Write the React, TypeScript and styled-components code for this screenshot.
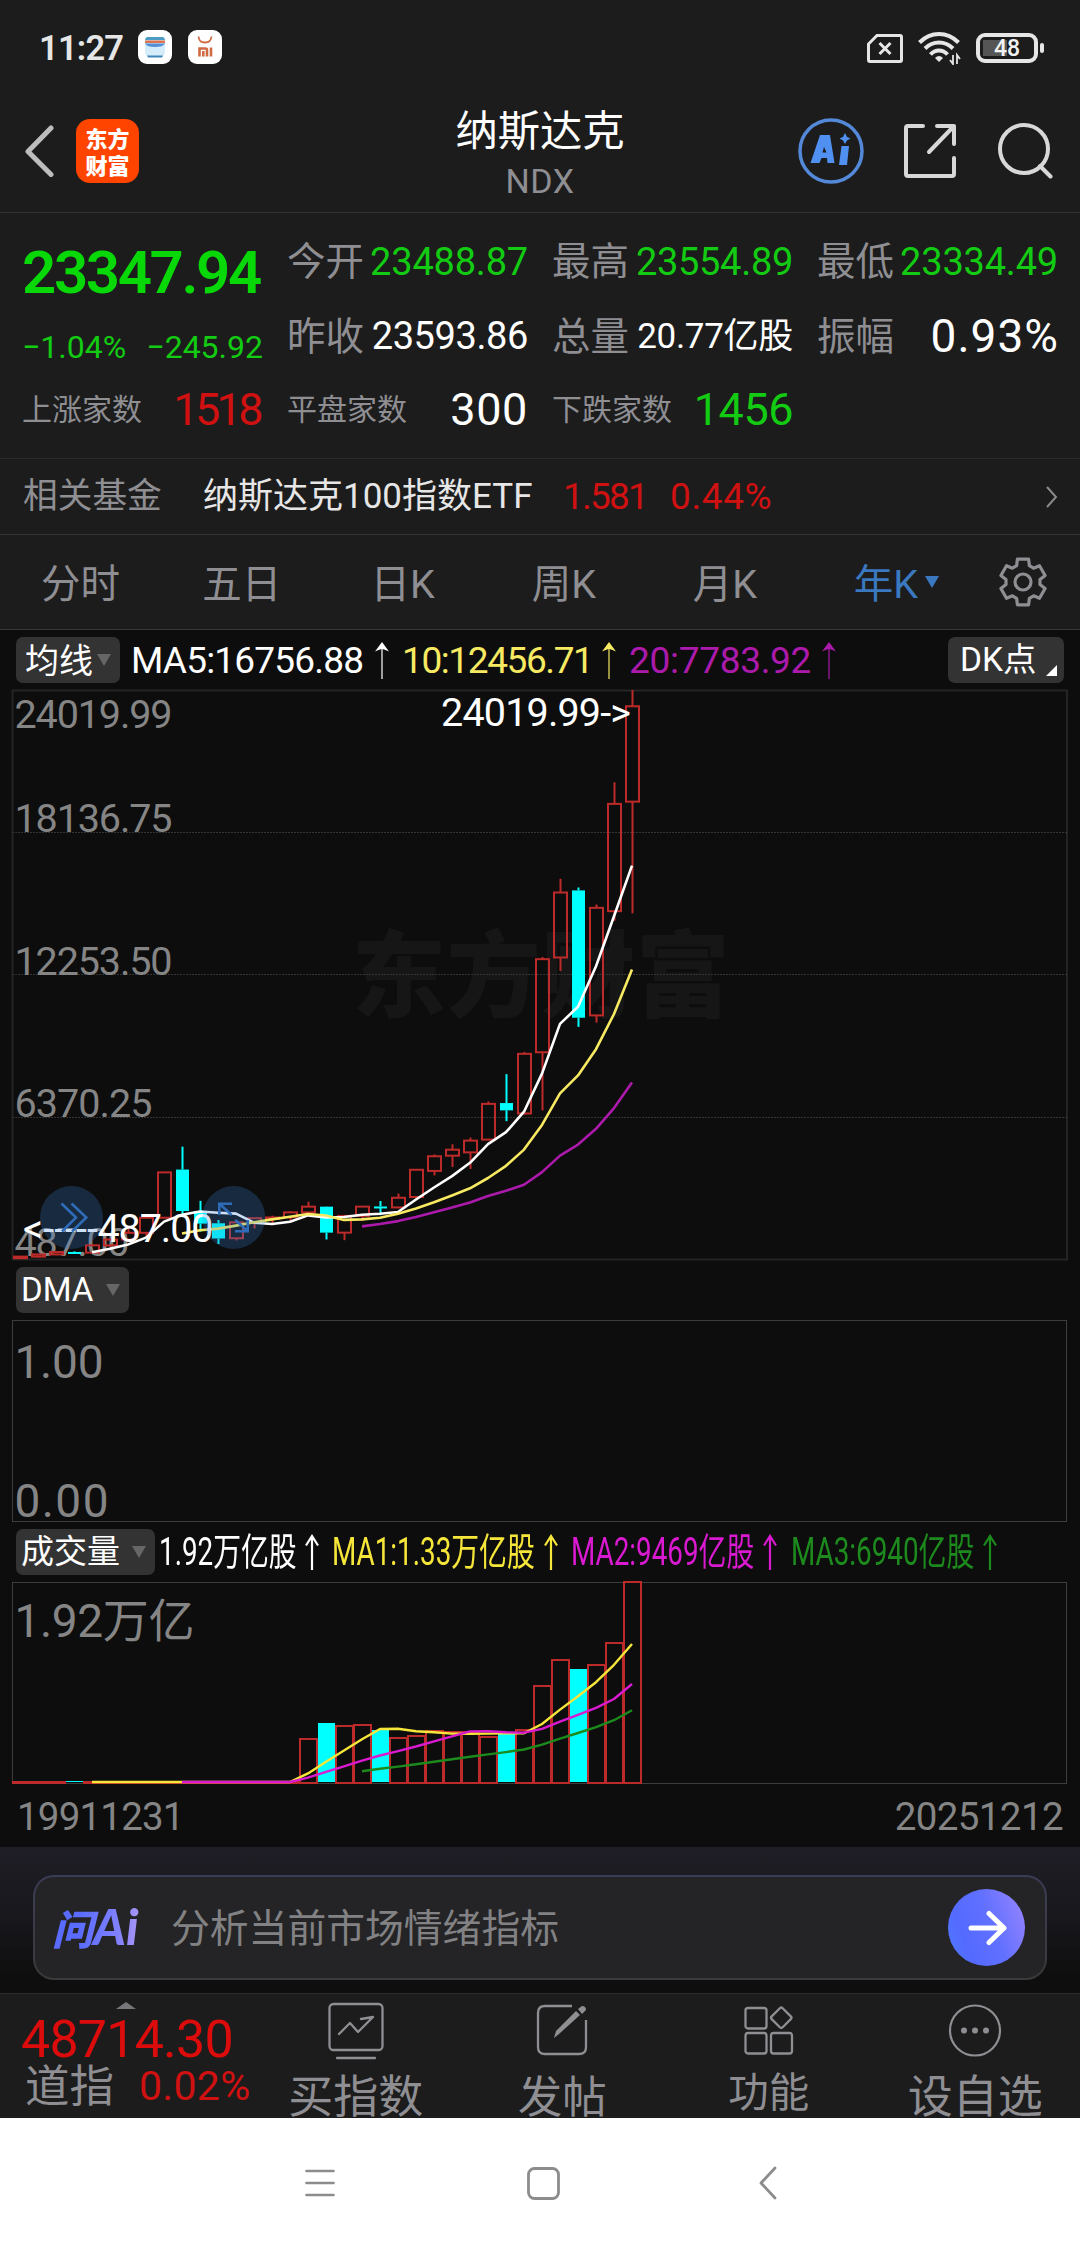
import React from "react";
import styled, { createGlobalStyle } from "styled-components";

const GREEN = "#12cb12";
const RED = "#cf1111";
const GRAY = "#8e8e93";
const BLUE = "#3a78c0";

const Global = createGlobalStyle`
  html, body { margin: 0; padding: 0; background: #fff; }
  * { box-sizing: border-box; }
  body { font-family: Roboto, "Noto Sans CJK SC", sans-serif; }
  svg { display: block; flex: none; }
`;

const Screen = styled.div`
  width: 1080px;
  height: 2248px;
  display: flex;
  flex-direction: column;
  background: #1c1c1c;
  overflow: hidden;
`;

/* text run: optional fixed advance box so neighbours keep their columns */
const T = styled.span<{ s: number; c?: string; ls?: number; b?: number; w?: number; ml?: number; mr?: number; dy?: number }>`
  display: block;
  flex: none;
  white-space: nowrap;
  line-height: 1.2;
  font-size: ${(p) => p.s}px;
  color: ${(p) => p.c || "#fff"};
  letter-spacing: ${(p) => p.ls || 0}px;
  font-weight: ${(p) => p.b || 400};
  width: ${(p) => (p.w ? p.w + "px" : "auto")};
  margin-left: ${(p) => p.ml || 0}px;
  margin-right: ${(p) => p.mr || 0}px;
  padding-top: ${(p) => (p.dy && p.dy > 0 ? p.dy * 2 : 0)}px;
  padding-bottom: ${(p) => (p.dy && p.dy < 0 ? -p.dy * 2 : 0)}px;
`;

const StatusBar = styled.div`
  height: 96px;
  flex: none;
  display: flex;
  align-items: center;
  padding: 0 36px 0 39px;
`;
const AppBadge = styled.div<{ ml: number }>`
  width: 34px;
  height: 34px;
  border-radius: 9px;
  background: #fff;
  margin-left: ${(p) => p.ml}px;
  margin-top: -2px;
`;
const StatusRight = styled.div`
  margin-left: auto;
  display: flex;
  align-items: center;
  gap: 15px;
`;
const Battery = styled.div`
  width: 62px;
  height: 30px;
  border: 4px solid #e6e6e6;
  border-radius: 9px;
  padding: 3px;
  position: relative;
  margin-right: 6px;
  background: linear-gradient(90deg, #555 0 24px, transparent 24px) 3px 3px / 100% 16px no-repeat;
  color: #f2f2f2;
  font-size: 23px;
  line-height: 18px;
  font-weight: 500;
  text-align: center;
  &::after {
    content: "";
    position: absolute;
    right: -10px;
    top: 6px;
    width: 4px;
    height: 10px;
    border-radius: 2px;
    background: #e6e6e6;
  }
`;

const Header = styled.div`
  height: 117px;
  flex: none;
  display: grid;
  grid-template-columns: 1fr auto 1fr;
  border-bottom: 1px solid #333;
`;
const HeaderLeft = styled.div`
  display: flex;
  align-items: center;
  padding: 0 0 6px 24px;
  gap: 21px;
`;
const HeaderRight = styled.div`
  display: flex;
  align-items: center;
  justify-content: flex-end;
  gap: 39px;
  padding: 0 26px 6px 0;
`;
const Brand = styled.div`
  width: 63px;
  height: 64px;
  border-radius: 14px;
  background: #ff4400;
  color: #fff;
  font: 900 22px/27px "Noto Sans CJK SC", sans-serif;
  display: flex;
  flex-direction: column;
  align-items: center;
  justify-content: center;
`;
const TitleBox = styled.div`
  display: flex;
  flex-direction: column;
  align-items: center;
  padding-top: 11px;
`;

const Quotes = styled.div`
  height: 246px;
  flex: none;
  display: grid;
  grid-template-columns: repeat(4, 241px);
  grid-template-rows: 75px 74px 72px;
  column-gap: 24px;
  padding: 12px 23px 0 22px;
  border-bottom: 1px solid #2a2a2a;
`;
const Pair = styled.div<{ pt?: number }>`
  display: flex;
  align-items: center;
  justify-content: space-between;
  padding-top: ${(p) => p.pt || 0}px;
`;

const FundRow = styled.div`
  height: 76px;
  flex: none;
  display: flex;
  align-items: center;
  padding: 0 22px 0 23px;
  border-bottom: 1px solid #333;
  & > svg { margin-left: auto; }
`;

const Tabs = styled.div`
  height: 95px;
  flex: none;
  display: grid;
  grid-template-columns: repeat(6, 161.1px) 1fr;
  border-bottom: 1px solid #383838;
`;
const Tab = styled.div<{ on?: boolean }>`
  position: relative;
  display: flex;
  align-items: center;
  justify-content: center;
  font-size: 39.5px;
  line-height: 48px;
  padding-top: 5px;
  color: ${(p) => (p.on ? BLUE : GRAY)};
`;
const TabCaret = styled.i`
  position: absolute;
  left: 120px;
  top: 41px;
  border: 7px solid transparent;
  border-top: 12px solid ${BLUE};
  border-bottom: 0;
`;
const GearCell = styled.div`
  display: flex;
  align-items: center;
  justify-content: center;
`;

const Panel = styled.div`
  background: #0d0d0d;
  height: 1217px;
  flex: none;
  padding: 0 12px;
  display: flex;
  flex-direction: column;
`;
const LegendRow = styled.div<{ h: number }>`
  height: ${(p) => p.h}px;
  flex: none;
  display: flex;
  align-items: center;
  padding: 0 4px;
`;
const Pill = styled.div<{ w: number; pl: number; end?: boolean }>`
  position: relative;
  width: ${(p) => p.w}px;
  height: 46px;
  flex: none;
  border-radius: 7px;
  background: #333;
  display: flex;
  align-items: center;
  padding-left: ${(p) => p.pl}px;
  margin-left: ${(p) => (p.end ? "auto" : "0")};
`;
const Caret = styled.i<{ ml: number }>`
  margin-left: ${(p) => p.ml}px;
  border: 7px solid transparent;
  border-top: 12px solid #666;
  border-bottom: 0;
`;
const Corner = styled.i`
  position: absolute;
  right: 7px;
  bottom: 7px;
  border-left: 11px solid transparent;
  border-bottom: 11px solid #fff;
`;
const Narrow = styled.div<{ w: number; c: string; ml: number }>`
  width: ${(p) => p.w}px;
  margin-left: ${(p) => p.ml}px;
  flex: none;
  color: ${(p) => p.c};
  font-size: 38px;
  line-height: 46px;
  white-space: nowrap;
  & > span {
    display: inline-block;
    transform: scaleX(0.732);
    transform-origin: left center;
  }
`;
const Plot = styled.svg`
  overflow: visible;
`;
const DateRow = styled.div`
  flex: 1;
  display: flex;
  justify-content: space-between;
  align-items: center;
  padding: 3px 5px 0 5px;
`;

const AskArea = styled.div`
  height: 146px;
  flex: none;
  padding: 28px 33px 0;
  background: linear-gradient(#1f1e26, #17171c 50%, #0e0e0e 90%);
`;
const AskBox = styled.div`
  height: 105px;
  border-radius: 21px;
  border: 2px solid transparent;
  background: linear-gradient(#242426, #242426) padding-box, linear-gradient(#3b3c55, #3a3a3c) border-box;
  display: flex;
  align-items: center;
  padding: 0 20px 0 17px;
`;
const AskLogo = styled.div`
  width: 119px;
  font: italic 900 50px/56px Lato, "Noto Sans CJK SC", sans-serif;
  & > span {
    display: inline-block;
    background: linear-gradient(90deg, #5a6cff 30%, #7f80ff 70%, #b09af0);
    -webkit-background-clip: text;
    background-clip: text;
    color: transparent;
    padding-right: 6px;
  }
  & small { font-size: 41px; }
`;
const Send = styled.div`
  margin-left: auto;
  width: 77px;
  height: 77px;
  border-radius: 50%;
  background: linear-gradient(70deg, #4f7bff, #546aff 25%, #6070ff 55%, #9a86ff);
  display: flex;
  align-items: center;
  justify-content: center;
`;

const BottomBar = styled.div`
  height: 125px;
  flex: none;
  display: grid;
  grid-template-columns: 252.500px repeat(4, 206.500px);
  border-top: 1px solid #2c2c2c;
`;
const IndexCell = styled.div`
  display: flex;
  flex-direction: column;
  padding: 8px 0 0 21px;
`;
const UpMark = styled.i`
  width: 0;
  margin-left: 95px;
  border: 10px solid transparent;
  border-bottom: 7px solid #77777b;
  border-top: 0;
`;
const IndexLine = styled.div`
  display: flex;
  align-items: center;
  margin-top: -10px;
  padding-left: 4px;
`;
const NavItem = styled.div<{ s: number; up?: number }>`
  display: flex;
  flex-direction: column;
  align-items: center;
  padding-top: 8px;
  & > span {
    font-size: ${(p) => p.s}px;
    line-height: 54px;
    margin-top: ${(p) => 11 - (p.up || 0)}px;
    color: ${GRAY};
    white-space: nowrap;
  }
`;
const SystemBar = styled.div`
  height: 130px;
  flex: none;
  background: #fff;
  display: grid;
  grid-template-columns: repeat(3, 224px);
  padding: 0 0 0 207.500px;
  align-items: center;
  justify-items: center;
`;

const years: [number, number, number, number][] = [
  // open, close, high, low
  [520, 586, 586, 487], [586, 677, 677, 545], [677, 777, 787, 645], [777, 752, 803, 694],
  [751, 1052, 1074, 740], [1052, 1291, 1328, 978], [1291, 1570, 1748, 1194], [1570, 2193, 2200, 1357],
  [2193, 4069, 4090, 2193], [4186, 2470, 5132, 2288], [2474, 1950, 2892, 1620], [1965, 1335, 2098, 1108],
  [1346, 2003, 2015, 1253], [2011, 2175, 2185, 1750], [2184, 2205, 2278, 1889], [2216, 2415, 2470, 2012],
  [2415, 2652, 2861, 2340], [2652, 1577, 2661, 1295], [1577, 2269, 2295, 1265], [2269, 2653, 2675, 2061],
  [2660, 2630, 2887, 2298], [2620, 3019, 3196, 2600], [3050, 4177, 4177, 3010], [4130, 4736, 4814, 3946],
  [4760, 5007, 5231, 4292], [4897, 5383, 5512, 4209], [5425, 6903, 7003, 5400], [6937, 6635, 8133, 6190],
  [6506, 8973, 9052, 6457], [9039, 12888, 12973, 6631], [12958, 15645, 16212, 12397], [15732, 10466, 15852, 10088],
  [10562, 15011, 15150, 10265], [14873, 19311, 20204, 14477], [19403, 23348, 24020, 14784],
];
const volumes = [
  1, 1, 1, 1, 1, 1, 1, 1, 1, 1, 1, 1, 1, 1, 1, 1,
  44, 59, 57, 58, 52, 45, 47, 52, 51, 51, 46, 48, 53, 97, 123, 113, 118, 140, 201,
];

const cx = (i: number) => 8 + 18 * i;
const py = (v: number) => 569 - (v - 487) * 0.024178;
const average = (data: number[], n: number, map: (v: number) => number) =>
  data
    .map((_, i) =>
      i < n - 1 ? "" : `${cx(i)},${map(data.slice(i - n + 1, i + 1).reduce((a, b) => a + b, 0) / n).toFixed(1)}`
    )
    .filter(Boolean)
    .join(" ");

const UP = "#bd2a2a";
const DOWN = "#00ffff";
const closes = years.map((y) => y[1]);

function Candle({ i, d }: { i: number; d: [number, number, number, number] }) {
  const [o, c, h, l] = d;
  const x = cx(i) + 0.5;
  const top = py(Math.max(o, c));
  const bottom = py(Math.min(o, c));
  const up = c >= o;
  const color = up ? UP : DOWN;
  return (
    <g stroke={color} strokeWidth={2}>
      <line x1={x} x2={x} y1={py(h)} y2={top} />
      <line x1={x} x2={x} y1={bottom} y2={py(l)} />
      {up ? (
        <rect x={x - 6.5} y={top} width={13} height={Math.max(bottom - top, 1.5)} fill="none" />
      ) : (
        <rect x={x - 6.5} y={top} width={13} height={Math.max(bottom - top, 2)} fill={color} stroke="none" />
      )}
    </g>
  );
}

const KLine = () => (
  <Plot width={1056} height={570} viewBox="0 0 1056 570">
    <rect x={0.5} y={0.5} width={1054.5} height={569} fill="none" stroke="#242424" strokeWidth={2} />
    <text x={340} y={320} fontSize={94} fontWeight={900} textLength={378} fill="#161616" fontFamily="Noto Sans CJK SC, sans-serif">
      东方财富
    </text>
    {[142.5, 284.5, 427.5].map((y) => (
      <line key={y} x1={0} x2={1055} y1={y} y2={y} stroke="#343434" strokeDasharray="2 1" />
    ))}
    <g fill="#858585" fontSize={39.5}>
      <text x={2.5} y={38} textLength={158}>24019.99</text>
      <text x={2.5} y={142} textLength={158}>18136.75</text>
      <text x={2.5} y={285} textLength={158}>12253.50</text>
      <text x={2.5} y={427} textLength={138}>6370.25</text>
      <text x={2.5} y={565.5} textLength={115}>487.00</text>
    </g>
    {years.map((d, i) => (
      <Candle key={i} i={i} d={d} />
    ))}
    <g fill="none" strokeWidth={2.6} strokeLinejoin="round">
      <polyline points={average(closes, 5, py)} stroke="#fff" />
      <polyline points={average(closes, 10, py)} stroke="#f7ea62" />
      <polyline points={average(closes, 20, py)} stroke="#ab1aab" />
    </g>
    <g fill="#fff" fontSize={39.5}>
      <text x={429} y={35.5} textLength={190}>24019.99-&gt;</text>
      <text x={11} y={552} textLength={75} lengthAdjust="spacingAndGlyphs">&lt;-----</text>
      <text x={85.5} y={552} textLength={116}>487.00</text>
    </g>
    <g fill="#3d85d9" fillOpacity={0.25}>
      <circle cx={59.5} cy={527.5} r={31.5} />
      <circle cx={221.7} cy={527.5} r={31.5} />
    </g>
    <g fill="none" stroke="#2f6cb8" strokeWidth={2.6}>
      <path d="M49.5 513.5L64 527.5L50 541.5M59.5 513.5L74.3 527.5L60 541.5" />
      <path d="M207.3 525V513.7H220M207.3 513.7L219.7 525M235.7 530V541.3H223M235.7 541.3L223.3 530" />
    </g>
  </Plot>
);

const DmaPlot = () => (
  <Plot width={1056} height={202} viewBox="0 0 1056 202">
    <rect x={0.5} y={0.5} width={1054} height={201} fill="none" stroke="#3d3d3d" />
    <g fill="#858585" fontSize={46}>
      <text x={2.5} y={58} textLength={89}>1.00</text>
      <text x={2.5} y={197} textLength={94}>0.00</text>
    </g>
  </Plot>
);

const VolumePlot = () => (
  <Plot width={1056} height={202} viewBox="0 0 1056 202">
    <rect x={0.5} y={0.5} width={1054} height={201} fill="none" stroke="#3d3d3d" />
    <text x={2.5} y={54.5} fontSize={46} textLength={180} fill="#858585">1.92万亿</text>
    {volumes.map((v, i) => {
      const down = years[i][1] < years[i][0] && (i === 3 || i > 11);
      const left = Math.max(cx(i) - 8, 1);
      return down ? (
        <rect key={i} x={left} y={200 - v} width={17} height={v} fill={DOWN} />
      ) : (
        <rect key={i} x={left} y={201 - v} width={17} height={v} fill="none" stroke={UP} strokeWidth={2} />
      );
    })}
    <g fill="none" strokeWidth={2.4} strokeLinejoin="round">
      <polyline points={average(volumes, 5, (v) => 201 - v)} stroke="#f7e63a" />
      <polyline points={average(volumes, 10, (v) => 201 - v)} stroke="#d91ad0" />
      <polyline points={average(volumes, 20, (v) => 201 - v)} stroke="#1c8a1c" />
    </g>
  </Plot>
);

const TrendArrow = styled.svg<{ $ml: number }>`
  margin-left: ${(p) => p.$ml}px;
`;
const Rise = ({ c, ml }: { c: string; ml: number }) => (
  <TrendArrow $ml={ml} width={14} height={37} viewBox="0 0 14 37">
    <path d="M7 0L14 9.5Q9 7 7 7Q5 7 0 9.5Z" fill={c} />
    <path d="M7 6V37" stroke={c} strokeWidth={1.6} opacity={0.75} />
  </TrendArrow>
);
const RiseOpen = ({ c, ml }: { c: string; ml: number }) => (
  <TrendArrow $ml={ml} width={14} height={36} viewBox="0 0 14 36">
    <path d="M1 11.5L7 2L13 11.5M7 2V36" fill="none" stroke={c} strokeWidth={2.2} />
  </TrendArrow>
);

const gearPath = (() => {
  const pts: string[] = [];
  for (let k = 0; k < 6; k++) {
    const base = -90 + k * 60;
    [[-22, 17.2], [-14, 23], [14, 23], [22, 17.2]].forEach(([a, r]) => {
      const t = ((base + a) * Math.PI) / 180;
      pts.push(`${(24 + r * Math.cos(t)).toFixed(1)} ${(25 + r * 1.02 * Math.sin(t)).toFixed(1)}`);
    });
  }
  return "M" + pts.join("L") + "Z";
})();

export default function App() {
  return (
    <Screen>
      <Global />
      <StatusBar>
        <T s={34.5} c="#e6e6e6" b={600} w={84} ls={-0.8} dy={1}>11:27</T>
        <AppBadge ml={15}>
          <svg width="34" height="34" viewBox="0 0 34 34">
            <rect x="7" y="7" width="20" height="20" rx="5" fill="#d5ecfa" />
            <path d="M9 7H25Q27 8 27 10H7Q7 8 9 7Z" fill="#4d9cc4" />
            <path d="M7 10.5H27V13H7Z" fill="#e0724f" />
            <path d="M7 13.5H27Q25 17 17 17Q9 17 7 13.5Z" fill="#5590d6" />
            <path d="M9 25.5H25L24 27.5H10Z" fill="#3f86b5" />
          </svg>
        </AppBadge>
        <AppBadge ml={16}>
          <svg width="34" height="34" viewBox="0 0 34 34" fill="none" stroke="#cf6a43">
            <path d="M10.500 6.500Q11 12.500 17 12.500Q23 12.500 23.500 6.500" strokeWidth="1.800" />
            <path d="M11.500 26.500V18.500H17.500Q19 18.500 19 20V26.500M15.300 21V26.500M23 17.500V26.500" strokeWidth="2.600" />
          </svg>
        </AppBadge>
        <StatusRight>
          <svg width="36" height="29" viewBox="0 0 36 29" fill="none" stroke="#e6e6e6" strokeWidth="3">
            <path d="M10 1.500H33Q34.500 1.500 34.500 3V26Q34.500 27.500 33 27.500H3Q1.500 27.500 1.500 26V10Z" />
            <path d="M12.500 9L23.500 20M23.500 9L12.500 20" />
          </svg>
          <svg width="43" height="34" viewBox="0 0 43 34" fill="none" stroke="#e6e6e6" strokeWidth="4">
            <path d="M1.500 11.500Q10 3 21 3Q32 3 40.500 11.500M7 17.500Q13 11.500 21 11.500Q29 11.500 35 17.500M12.500 23.500Q16 19.500 21 19.500Q26 19.500 29.500 23.500" />
            <path d="M21 31L17 27Q19 25 21 25Q23 25 25 27Z" fill="#e6e6e6" stroke="none" />
            <path d="M35 24V33L32 29M39 33V24L42 28" strokeWidth="1.800" />
          </svg>
          <Battery>48</Battery>
        </StatusRight>
      </StatusBar>

      <Header>
        <HeaderLeft>
          <svg width="31" height="52" viewBox="0 0 31 52" fill="none" stroke="#bdbdbd" strokeWidth="5" strokeLinecap="round" strokeLinejoin="round">
            <path d="M27 3L4 26.500L27 49.500" />
          </svg>
          <Brand>
            <span>东方</span>
            <span>财富</span>
          </Brand>
        </HeaderLeft>
        <TitleBox>
          <T s={42.3}>纳斯达克</T>
          <T s={34} c={GRAY} ls={0.5} dy={1.5}>NDX</T>
        </TitleBox>
        <HeaderRight>
          <svg width="66" height="68" viewBox="0 0 66 68">
            <circle cx="33" cy="34" r="31" fill="none" stroke="#5488d8" strokeWidth="3.500" />
            <path fill="#5090f0" fillRule="evenodd" d="M22 18H32L36.500 46H29.500L29 41H23.500L21.500 46H12.500ZM26 30L24.500 35.500H28.500Z M43.500 29H51L49 48H41Z M47 16L49 20L52.500 21.500L49 23.500L47 27L45 23.500L41.500 21.500L45 20Z" />
          </svg>
          <svg width="56" height="56" viewBox="0 0 56 56" fill="none" stroke="#d8d8d8" strokeWidth="4" strokeLinecap="round" strokeLinejoin="round">
            <path d="M20 3H5Q3 3 3 5V51Q3 53 5 53H49Q51 53 51 51V35M34 3H51V21M51 3L26 29" />
          </svg>
          <svg width="56" height="56" viewBox="0 0 56 56" fill="none" stroke="#d8d8d8" strokeWidth="4" strokeLinecap="round">
            <circle cx="26" cy="26" r="24" />
            <path d="M42 43L52.500 53.500" />
          </svg>
        </HeaderRight>
      </Header>

      <Quotes>
        <Pair pt={20}><T s={60} c="#08d808" b={600} ls={-2.4}>23347.94</T></Pair>
        <Pair><T s={38.5} c={GRAY}>今开</T><T s={38} c={GREEN} ls={-0.2}>23488.87</T></Pair>
        <Pair><T s={38.5} c={GRAY}>最高</T><T s={38} c={GREEN} ls={-0.3}>23554.89</T></Pair>
        <Pair><T s={38.5} c={GRAY}>最低</T><T s={38} c={GREEN} ls={-0.2}>23334.49</T></Pair>
        <Pair pt={20}><T s={32} c={GREEN}>−1.04%</T><T s={32} c={GREEN}>−245.92</T></Pair>
        <Pair><T s={38.5} c={GRAY}>昨收</T><T s={38} ls={-0.4}>23593.86</T></Pair>
        <Pair><T s={38.5} c={GRAY}>总量</T><T s={35} ls={-0.3}>20.77亿股</T></Pair>
        <Pair><T s={38.5} c={GRAY}>振幅</T><T s={46} ls={1} mr={-1}>0.93%</T></Pair>
        <Pair><T s={30} c={GRAY}>上涨家数</T><T s={45} c={RED} ls={-3.6} mr={3}>1518</T></Pair>
        <Pair><T s={30} c={GRAY}>平盘家数</T><T s={45} ls={0.6}>300</T></Pair>
        <Pair><T s={30} c={GRAY}>下跌家数</T><T s={45} c={GREEN} ls={-0.5}>1456</T></Pair>
      </Quotes>

      <FundRow>
        <T s={34.7} c={GRAY} w={180} dy={0.5}>相关基金</T>
        <T s={35} c="#e6e6e6" w={360} dy={0.5}>纳斯达克100指数ETF</T>
        <T s={37} c={RED} w={107} ls={-1.8} dy={0.5}>1.581</T>
        <T s={37} c={RED} ls={0.6} dy={0.5}>0.44%</T>
        <svg width="13" height="24" viewBox="0 0 13 24" fill="none" stroke="#8a8a8a" strokeWidth="2"><path d="M2 2L11 12L2 22" /></svg>
      </FundRow>

      <Tabs>
        {["分时", "五日", "日K", "周K", "月K"].map((t) => <Tab key={t}>{t}</Tab>)}
        <Tab on>年K<TabCaret /></Tab>
        <GearCell>
          <svg width="48" height="50" viewBox="0 0 48 50" fill="none" stroke="#8e8e93" strokeWidth="3.200" strokeLinejoin="round">
            <path d={gearPath} />
            <circle cx="24" cy="25" r="8" />
          </svg>
        </GearCell>
      </Tabs>

      <Panel>
        <LegendRow h={60}>
          <Pill w={104} pl={9}><T s={34} dy={1}>均线</T><Caret ml={4} /></Pill>
          <T s={37} ml={11} w={243} ls={-0.8} dy={1}>MA5:16756.88</T>
          <Rise c="#fff" ml={1} />
          <T s={37} ml={13} w={196} c="#f7ea62" ls={-1.4} dy={1}>10:12456.71</T>
          <Rise c="#f7ea62" ml={4} />
          <T s={37} ml={13} w={190} c="#ab1aab" ls={-0.3} dy={1}>20:7783.92</T>
          <Rise c="#ab1aab" ml={3} />
          <Pill w={116} pl={12} end><T s={33.5}>DK点</T><Corner /></Pill>
        </LegendRow>
        <KLine />
        <LegendRow h={60}>
          <Pill w={113} pl={5}><T s={33}>DMA</T><Caret ml={13} /></Pill>
        </LegendRow>
        <DmaPlot />
        <LegendRow h={60}>
          <Pill w={139} pl={5}><T s={33}>成交量</T><Caret ml={12} /></Pill>
          <Narrow w={140} ml={4} c="#fff"><span>1.92万亿股</span></Narrow>
          <RiseOpen c="#fff" ml={6} />
          <Narrow w={206} ml={13} c="#f7e63a"><span>MA1:1.33万亿股</span></Narrow>
          <RiseOpen c="#f7e63a" ml={6} />
          <Narrow w={186} ml={13} c="#d91ad0"><span>MA2:9469亿股</span></Narrow>
          <RiseOpen c="#d91ad0" ml={6} />
          <Narrow w={186} ml={14} c="#1c8a1c"><span>MA3:6940亿股</span></Narrow>
          <RiseOpen c="#1c8a1c" ml={6} />
        </LegendRow>
        <VolumePlot />
        <DateRow>
          <T s={38.5} c="#858585" ls={-0.8}>19911231</T>
          <T s={38.5} c="#858585" ls={-0.6}>20251212</T>
        </DateRow>
      </Panel>

      <AskArea>
        <AskBox>
          <AskLogo><span><small>问</small>Ai</span></AskLogo>
          <T s={38.8} c="#828284" dy={1.5}>分析当前市场情绪指标</T>
          <Send>
            <svg width="40" height="36" viewBox="0 0 40 36" fill="none" stroke="#fff" strokeWidth="5" strokeLinecap="round" strokeLinejoin="round">
              <path d="M4 18H37M22 3.500L37 18L22 32.500" />
            </svg>
          </Send>
        </AskBox>
      </AskArea>

      <BottomBar>
        <IndexCell>
          <UpMark />
          <T s={52} c="#dc0c0c" ls={-0.8}>48714.30</T>
          <IndexLine>
            <T s={44.5} c={GRAY} w={114}>道指</T>
            <T s={41} c={RED} ls={0.3} dy={-1}>0.02%</T>
          </IndexLine>
        </IndexCell>
        <NavItem s={45}>
          <svg width="56" height="58" viewBox="0 0 56 58" fill="none" stroke="#8e8e93" strokeWidth="2.300" strokeLinecap="round" strokeLinejoin="round">
            <rect x="1.500" y="2" width="53" height="46" rx="4" />
            <path d="M9 56H47M11 32L22 21L30 30L45 15M33 17L45 15" />
          </svg>
          <span>买指数</span>
        </NavItem>
        <NavItem s={44.5}>
          <svg width="52" height="58" viewBox="0 0 52 58" fill="none" stroke="#8e8e93" strokeWidth="2.300">
            <path d="M36 4H9Q2 4 2 11V45Q2 52 9 52H43Q50 52 50 45V18" />
            <path d="M18 36L20 29L40 9L44 13L23 32Z M42 7L46 4Q50 4 50 8L46 12Z" fill="#8e8e93" stroke="none" />
          </svg>
          <span>发帖</span>
        </NavItem>
        <NavItem s={40.5} up={5}>
          <svg width="50" height="58" viewBox="0 0 50 58" fill="none" stroke="#8e8e93" strokeWidth="2.300" strokeLinejoin="round">
            <rect x="1.500" y="6" width="21" height="20.500" rx="2.500" />
            <rect x="1.500" y="31" width="21" height="20.500" rx="2.500" />
            <rect x="27" y="31" width="21" height="20.500" rx="2.500" />
            <rect x="29.500" y="8" width="15.500" height="15.500" rx="2" transform="rotate(45 37.250 15.750)" />
          </svg>
          <span>功能</span>
        </NavItem>
        <NavItem s={45}>
          <svg width="54" height="58" viewBox="0 0 54 58">
            <circle cx="27" cy="28.500" r="25" fill="none" stroke="#8e8e93" strokeWidth="2.200" />
            <g fill="#8e8e93"><circle cx="16" cy="28.500" r="3" /><circle cx="27" cy="28.500" r="3" /><circle cx="38" cy="28.500" r="3" /></g>
          </svg>
          <span>设自选</span>
        </NavItem>
      </BottomBar>

      <SystemBar>
        <svg width="30" height="30" viewBox="0 0 30 30" stroke="#8c8c8c" strokeWidth="2.600" strokeLinecap="round"><path d="M1.500 3H28.500M1.500 15H28.500M1.500 27H28.500" /></svg>
        <svg width="33" height="33" viewBox="0 0 33 33" fill="none" stroke="#8c8c8c" strokeWidth="2.800"><rect x="1.500" y="1.500" width="30" height="30" rx="6" /></svg>
        <svg width="18" height="34" viewBox="0 0 18 34" fill="none" stroke="#8c8c8c" strokeWidth="2.800" strokeLinecap="round" strokeLinejoin="round"><path d="M16 2L2 17L16 32" /></svg>
      </SystemBar>
    </Screen>
  );
}
